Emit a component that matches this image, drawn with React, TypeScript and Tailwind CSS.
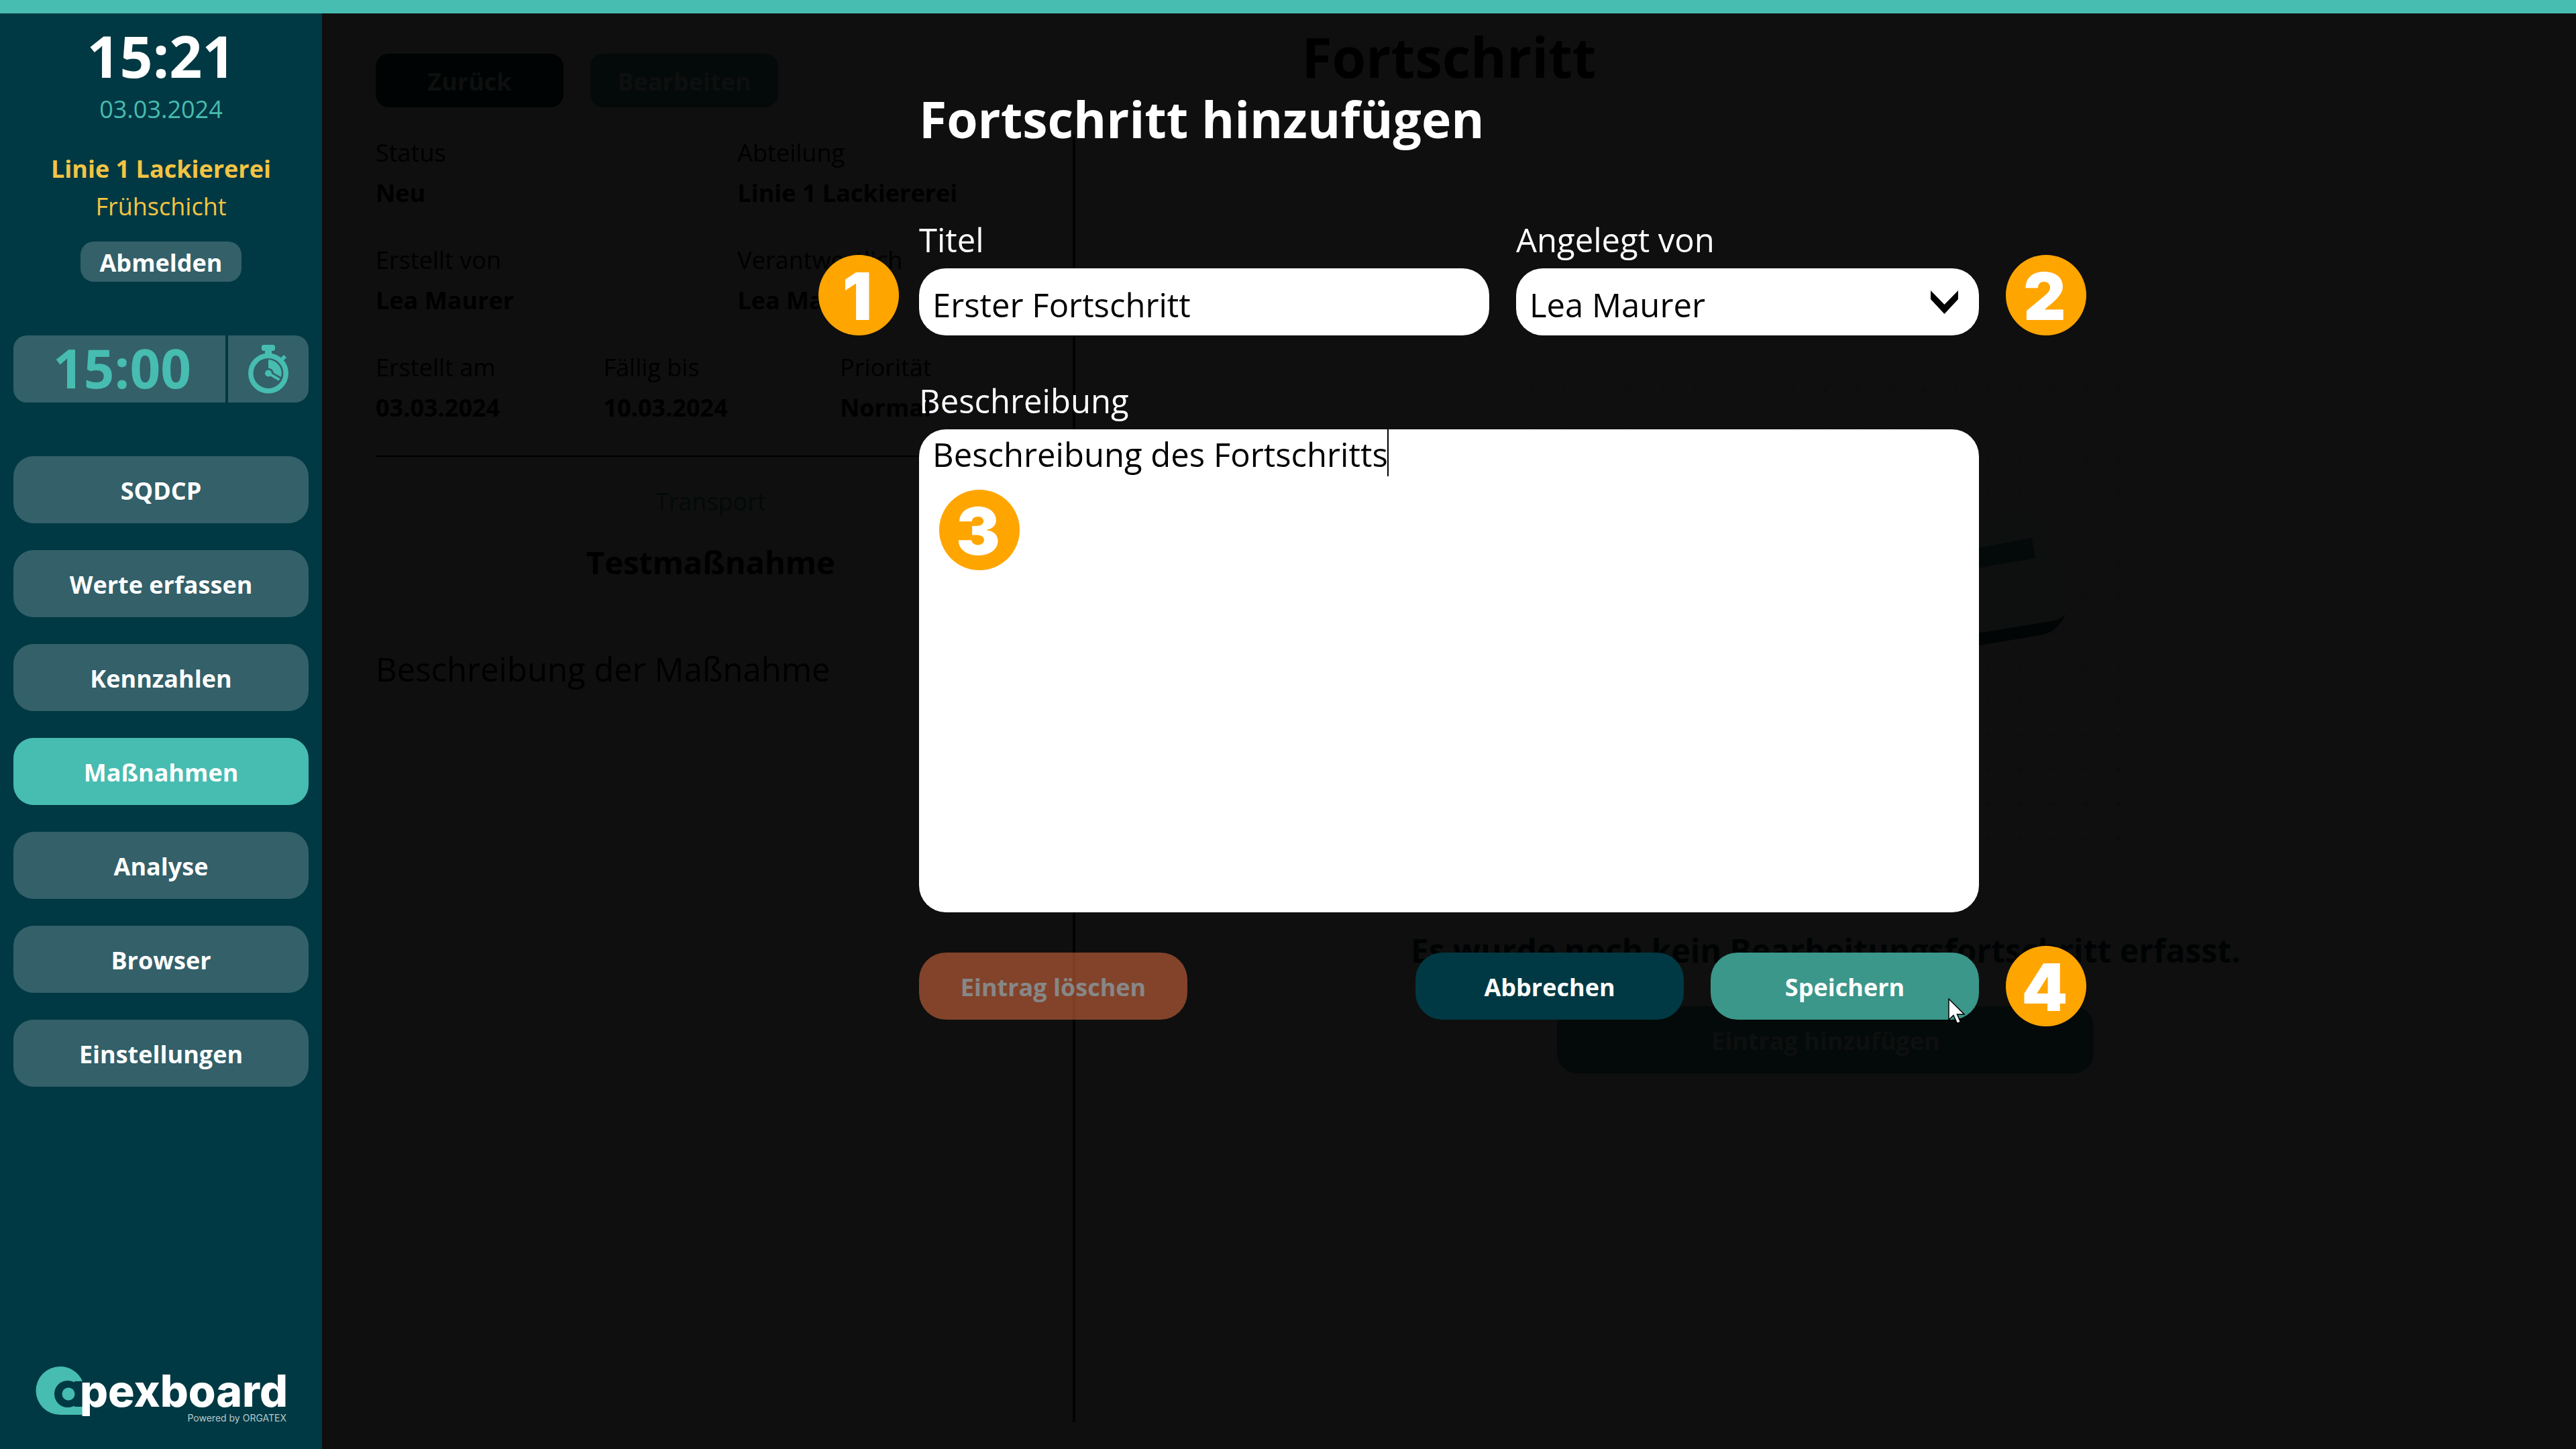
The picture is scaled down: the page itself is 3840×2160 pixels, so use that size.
import type { ReactNode } from "react";

const navItems = [
  { label: "SQDCP", active: false },
  { label: "Werte erfassen", active: false },
  { label: "Kennzahlen", active: false },
  { label: "Maßnahmen", active: true },
  { label: "Analyse", active: false },
  { label: "Browser", active: false },
  { label: "Einstellungen", active: false },
];

const dotColumns = Array.from({ length: 19 }, (_, i) => i);
const dotRows = Array.from({ length: 14 }, (_, i) => i);

function StopwatchIcon() {
  return (
    <svg viewBox="0 0 60 74" className="h-[74px] w-[60px] text-[#47bcb0]" fill="currentColor" aria-hidden="true">
      <rect x="20" y="1" width="20" height="9" rx="3" />
      <rect x="25" y="9" width="10" height="6" />
      <path d="M48 21l5-5 4 4-5 5z" />
      <circle cx="30" cy="43.500" r="26.200" fill="none" stroke="currentColor" strokeWidth="7.500" />
      <path d="M30 23A20.500 20.500 0 0 1 49 49L38 43A8.500 8.500 0 0 0 30 35.500z" />
      <circle cx="30" cy="43.500" r="5" />
      <path d="M30 43.500L46.500 53" stroke="currentColor" strokeWidth="4" />
    </svg>
  );
}

function Logo() {
  return (
    <svg viewBox="0 0 380 92" className="h-[92px] w-[380px]" role="img" aria-label="apexboard – Powered by ORGATEX">
      <path d="M36.500 0A36.500 36.500 0 0 1 70 22V72H36.500A36 36 0 0 1 36.500 0z" fill="#47bcb0" />
      <circle cx="48" cy="41" r="20" fill="#003943" />
      <rect x="58" y="22" width="12" height="38" fill="#003943" />
      <circle cx="49" cy="41" r="9.500" fill="#47bcb0" />
      <text x="66" y="60" fontSize="66" fontWeight="800" fill="#fff" fontFamily="Inter, sans-serif">
        pexboard
      </text>
      <text x="374" y="82" fontSize="14" textAnchor="end" fill="#b9c9cc" fontFamily="Inter, sans-serif">
        Powered by ORGATEX
      </text>
    </svg>
  );
}

function Badge({ children, className }: { children: ReactNode; className: string }) {
  return (
    <span
      className={`absolute z-30 flex size-[120px] items-center justify-center rounded-full bg-[#ffa500] pt-1 pr-1 font-['Inter',sans-serif] text-[98px] leading-none font-black text-white ${className}`}
    >
      {children}
    </span>
  );
}

function Fact({ label, value }: { label: string; value: string }) {
  return (
    <div className="flex flex-col gap-[6px]">
      <dt>{label}</dt>
      <dd className="font-bold">{value}</dd>
    </div>
  );
}

function Sidebar() {
  return (
    <aside className="flex w-[480px] shrink-0 flex-col bg-[#003943] px-5 text-[36px] leading-[56px]">
      <div className="flex flex-col items-center pt-1 text-[#f4c443]">
        <time className="text-[86px] leading-[118px] font-bold text-white">15:21</time>
        <time className="leading-[42px] text-[#47bcb0]">03.03.2024</time>
        <strong className="mt-10 font-bold">Linie 1 Lackiererei</strong>
        <span>Frühschicht</span>
        <button type="button" className="mt-6 h-[60px] w-[240px] rounded-[20px] bg-[#336069] pt-[3px] font-bold text-white">
          Abmelden
        </button>
      </div>
      <div className="mt-20 flex h-[100px] gap-1">
        <div className="flex flex-1 items-center justify-center rounded-l-[20px] bg-[#336069] pr-1 pb-1 pl-3 text-[80px] leading-[96px] font-bold text-[#47bcb0]">
          15:00
        </div>
        <button
          type="button"
          aria-label="Timer"
          className="flex w-[120px] items-center justify-center rounded-r-[20px] bg-[#336069]"
        >
          <StopwatchIcon />
        </button>
      </div>
      <nav className="mt-20 flex flex-col gap-10">
        {navItems.map((item) => (
          <button
            key={item.label}
            type="button"
            aria-current={item.active ? "page" : undefined}
            className={`h-[100px] rounded-[30px] pt-[3px] font-bold text-white ${item.active ? "bg-[#47bcb0]" : "bg-[#336069]"}`}
          >
            {item.label}
          </button>
        ))}
      </nav>
      <div className="mt-auto pb-[31px] pl-[33px]">
        <Logo />
      </div>
    </aside>
  );
}

function Illustration() {
  return (
    <svg viewBox="0 0 900 760" className="h-[760px] w-[900px]" aria-hidden="true">
      {dotRows.map((row) =>
        dotColumns.map((col) => (
          <circle key={`${row}-${col}`} cx={13 + col * 48.55} cy={20 + row * 51.5} r="2.200" fill="#0b0e0e" />
        )),
      )}
      <path d="M300 300L720 205Q775 196 783 245L807 345Q809 352 807 356L780 366L300 450z" fill="#0e100f" />
      <path d="M560 278L758 241L763 271L560 306z" fill="#040a09" />
      <path d="M560 402L787 365Q800 363 808 355Q796 382 769 386L560 421z" fill="#010505" />
    </svg>
  );
}

function DimmedPage() {
  return (
    <div className="pointer-events-none col-start-1 row-start-1 flex flex-col text-[36px] leading-[54px] text-black">
      <div className="grid h-[181px]">
        <div className="col-start-1 row-start-1 flex gap-10 pt-[60px] pl-20 font-bold text-[#0e0f0f]">
          <button type="button" tabIndex={-1} className="h-20 w-[280px] rounded-[20px] bg-[#000303] pt-[3px]">
            Zurück
          </button>
          <button type="button" tabIndex={-1} className="h-20 w-[280px] rounded-[20px] bg-[#040a09] pt-[3px]">
            Bearbeiten
          </button>
        </div>
        <h1 className="col-start-1 row-start-1 justify-self-center text-[82px] leading-[128px] font-bold">Fortschritt</h1>
      </div>
      <div className="grid flex-1 grid-cols-[1fr_4px_2fr] pb-10">
        <section className="pr-10 pl-20">
          <dl className="grid grid-cols-2 gap-x-20 gap-y-[46px]">
            <Fact label="Status" value="Neu" />
            <Fact label="Abteilung" value="Linie 1 Lackiererei" />
            <Fact label="Erstellt von" value="Lea Maurer" />
            <Fact label="Verantwortlich" value="Lea Maurer" />
          </dl>
          <dl className="relative z-10 mt-[46px] grid grid-cols-[340fr_353fr_307fr]">
            <Fact label="Erstellt am" value="03.03.2024" />
            <Fact label="Fällig bis" value="10.03.2024" />
            <Fact label="Priorität" value="Normal" />
          </dl>
          <hr className="mt-11 border-t-2 border-black" />
          <p className="mt-10 text-center text-[#020a09]">Transport</p>
          <h2 className="mt-7 text-center text-[47px] leading-[70px] font-bold">Testmaßnahme</h2>
          <p className="mt-[89px] text-[49px] leading-[70px]">Beschreibung der Maßnahme</p>
        </section>
        <div className="bg-[#000303]" />
        <section className="flex flex-col items-center pt-[360px]">
          <Illustration />
          <p className="mt-[61px] text-[48px] leading-[70px] font-bold text-[#000303]">
            Es wurde noch kein Bearbeitungsfortschritt erfasst.
          </p>
          <button
            type="button"
            tabIndex={-1}
            className="mt-12 h-[100px] w-[800px] rounded-[30px] bg-[#040a09] pt-[3px] font-bold text-[#0e0f0f]"
          >
            Eintrag hinzufügen
          </button>
        </section>
      </div>
    </div>
  );
}

function ProgressDialog() {
  return (
    <form
      role="dialog"
      aria-labelledby="dialog-title"
      className="col-start-1 row-start-1 w-[1580px] justify-self-center pt-[116px] text-[49px] leading-[80px] text-white"
    >
      <h2 id="dialog-title" className="text-[75px] leading-[82px] font-bold">
        Fortschritt hinzufügen
      </h2>
      <div className="mt-[99px] grid grid-cols-[850fr_690fr] gap-x-10">
        <div className="relative flex flex-col">
          <label htmlFor="title">Titel</label>
          <input
            id="title"
            type="text"
            defaultValue="Erster Fortschritt"
            className="z-20 mt-[3px] h-[100px] w-full rounded-[40px] bg-white px-5 pt-2 text-black outline-none"
          />
          <Badge className="top-[63px] -left-[150px]">1</Badge>
        </div>
        <div className="relative flex flex-col">
          <label htmlFor="author">Angelegt von</label>
          <select
            id="author"
            defaultValue="Lea Maurer"
            className="z-20 mt-[3px] h-[100px] w-full appearance-none rounded-[40px] bg-white px-5 pt-2 text-black outline-none"
          >
            <option>Lea Maurer</option>
          </select>
          <svg
            viewBox="0 0 41 35"
            className="pointer-events-none absolute right-[31px] bottom-8 z-30 h-[35px] w-[41px]"
            aria-hidden="true"
          >
            <path d="M0 0L20.500 21L41 0V13L20.500 35L0 13z" fill="#000" />
          </svg>
          <Badge className="top-[63px] -right-[160px]">2</Badge>
        </div>
      </div>
      <div className="relative mt-[57px] flex flex-col">
        <label htmlFor="description">Beschreibung</label>
        <textarea
          id="description"
          defaultValue="Beschreibung des Fortschritts"
          className="z-20 mt-[3px] h-[720px] w-full resize-none rounded-[40px] bg-white px-5 leading-[74px] text-black outline-none"
        />
        <span className="absolute top-[83px] left-[698px] z-30 h-[70px] w-[2px] bg-black" />
        <Badge className="top-[173px] left-[30px]">3</Badge>
      </div>
      <div className="relative mt-[60px] flex gap-10 text-[36px]">
        <button
          type="button"
          disabled
          className="z-20 mr-auto h-[100px] w-[400px] rounded-[40px] bg-[#f57745] pt-[3px] font-bold opacity-50"
        >
          Eintrag löschen
        </button>
        <button type="button" className="z-20 h-[100px] w-[400px] rounded-[40px] bg-[#003943] pt-[3px] font-bold">
          Abbrechen
        </button>
        <button type="submit" className="z-20 h-[100px] w-[400px] rounded-[40px] bg-[#3a978a] pt-[3px] font-bold">
          Speichern
        </button>
        <svg viewBox="0 0 26 40" className="pointer-events-none absolute right-5 -bottom-2 z-30 h-10 w-[26px]" aria-hidden="true">
          <path
            d="M1 1V32L8 25.500L13.500 37.500L18.500 35.500L13.500 24H24z"
            fill="#fff"
            stroke="#000"
            strokeWidth="1.500"
          />
        </svg>
        <Badge className="-top-[10px] -right-[160px]">4</Badge>
      </div>
    </form>
  );
}

export default function App() {
  return (
    <div className="flex min-h-screen flex-col bg-[#0f0f0f] font-['Open_Sans',sans-serif]">
      <div className="h-5 bg-[#47bcb0]" />
      <div className="flex flex-1">
        <Sidebar />
        <main className="grid flex-1">
          <DimmedPage />
          <ProgressDialog />
        </main>
      </div>
    </div>
  );
}
